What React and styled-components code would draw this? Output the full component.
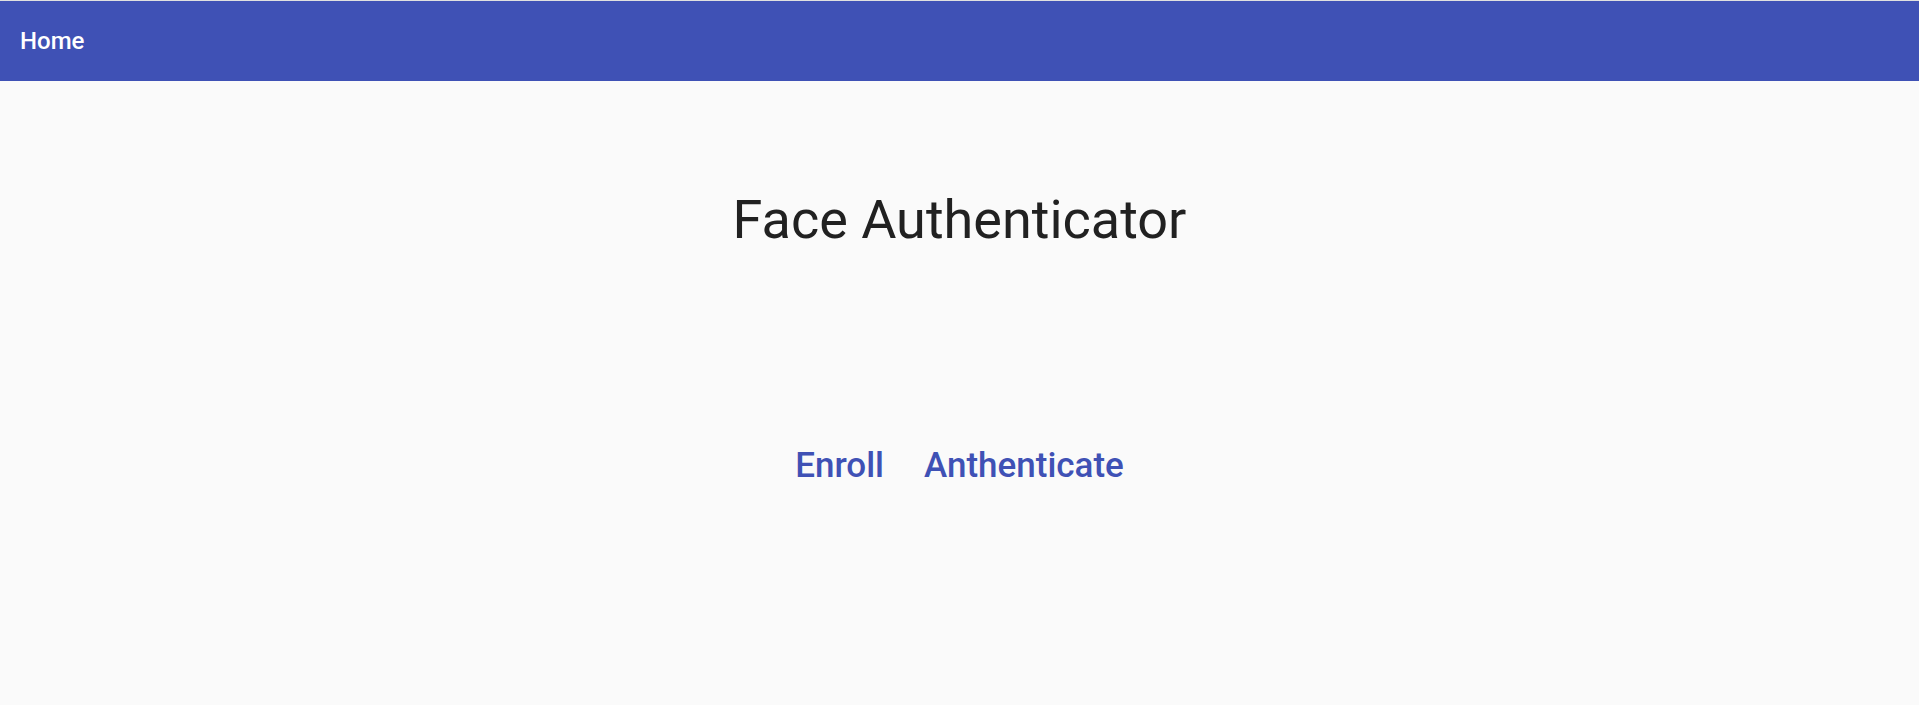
import React from 'react';
import styled, {createGlobalStyle} from 'styled-components';

const GlobalStyle = createGlobalStyle`
  html, body {
    margin: 0;
    padding: 0;
    background: #fafafa;
    font-family: Roboto, "Liberation Sans", sans-serif;
  }
`

const Page = styled.div`
  min-height: 705px;
  background: #fafafa;
  border-top: 1px solid #e0e0e0;
`

const AppBar = styled.header`
  height: 80px;
  background: #3f51b5;
  display: flex;
  align-items: center;
  padding: 0 20px;
  box-sizing: border-box;
`

const HomeLink = styled.a`
  color: #fff;
  font-size: 24px;
  font-weight: 500;
  text-decoration: none;
`

const Main = styled.main`
  display: flex;
  flex-direction: column;
  align-items: center;
`

const Title = styled.h1`
  margin: 107px 0 0;
  font-size: 54px;
  font-weight: 400;
  line-height: 1.2;
  color: #212121;
`

const Links = styled.nav`
  display: flex;
  gap: 40px;
  margin-top: 192px;
`

const NavLink = styled.a`
  color: #3f51b5;
  font-size: 35px;
  font-weight: 500;
  text-decoration: none;
  cursor: pointer;
`

const App = () => {
  return (
    <Page>
      <GlobalStyle />
      <AppBar>
        <HomeLink href="#">Home</HomeLink>
      </AppBar>
      <Main>
        <Title>Face Authenticator</Title>
        <Links>
          <NavLink href="#">Enroll</NavLink>
          <NavLink href="#">Anthenticate</NavLink>
        </Links>
      </Main>
    </Page>
  )
}

export default App;
